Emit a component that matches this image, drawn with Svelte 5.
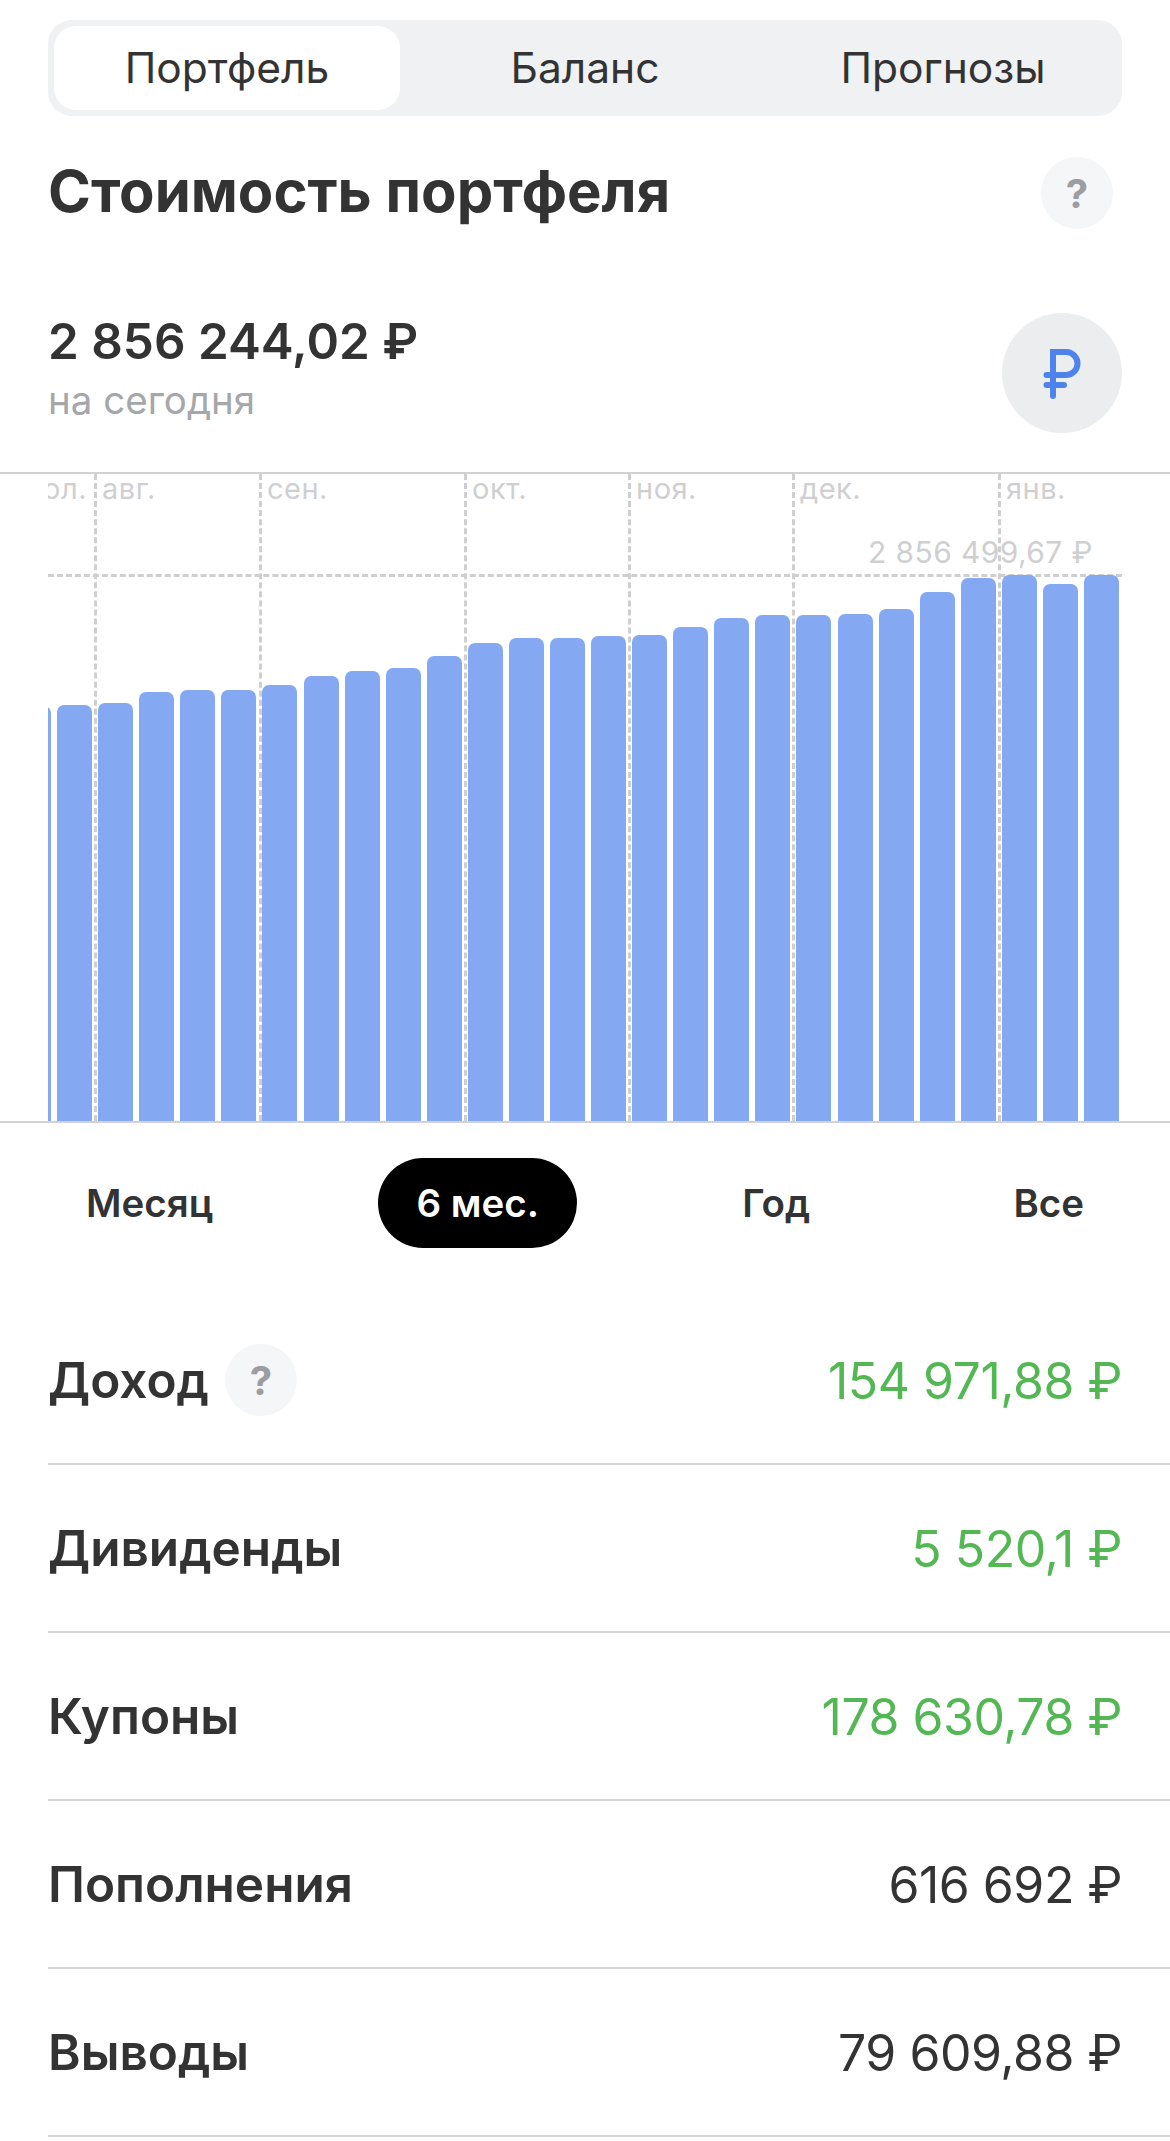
<script>
  const tabs = [
    { label: 'Портфель', active: true },
    { label: 'Баланс' },
    { label: 'Прогнозы' }
  ];
  const baseline = 1121;
  const tops = [706, 705, 703, 692, 690, 690, 685, 676, 671, 668, 656, 643, 638, 638, 636, 635, 627, 618, 615, 615, 614, 609, 592, 578, 575, 584, 575];
  const months = [
    { x: 95, label: 'авг.' },
    { x: 260, label: 'сен.' },
    { x: 465, label: 'окт.' },
    { x: 629, label: 'ноя.' },
    { x: 793, label: 'дек.' },
    { x: 999, label: 'янв.' }
  ];
  const periods = [
    { label: 'Месяц' },
    { label: '6 мес.', active: true },
    { label: 'Год' },
    { label: 'Все' }
  ];
  const rows = [
    { label: 'Доход', value: '154 971,88 ₽', green: true, help: true },
    { label: 'Дивиденды', value: '5 520,1 ₽', green: true },
    { label: 'Купоны', value: '178 630,78 ₽', green: true },
    { label: 'Пополнения', value: '616 692 ₽' },
    { label: 'Выводы', value: '79 609,88 ₽' }
  ];
</script>

<main class="page">
  <div class="tabs">
    {#each tabs as tab}
      <div class="tab" class:active={tab.active}>{tab.label}</div>
    {/each}
  </div>

  <div class="title-row">
    <h1>Стоимость портфеля</h1>
    <span class="help">?</span>
  </div>

  <div class="hero">
    <div>
      <div class="amount">2 856 244,02 ₽</div>
      <div class="today">на сегодня</div>
    </div>
    <div class="ruble">
      <svg width="120" height="120" viewBox="0 0 120 120" fill="none" stroke="#4f83ec" stroke-width="6" stroke-linecap="round">
        <path d="M51 83V39H64a11.5 11.5 0 0 1 0 23H44.5" stroke-linecap="butt" />
        <path d="M44.5 62H50M44.5 72H62M51 62V83" />
      </svg>
    </div>
  </div>

  <div class="chart">
    <div class="month clipped">июл.</div>
    {#each months as m}
      <div class="vline" style="left:{m.x - 1.5}px"></div>
      <div class="month" style="left:{m.x + 7}px">{m.label}</div>
    {/each}
    <div class="hline"></div>
    <div class="max">2 856 499,67 ₽</div>
    <div class="bars">
      {#each tops as top}
        <div class="bar" style="height:{baseline - top}px"></div>
      {/each}
    </div>
  </div>

  <div class="periods">
    {#each periods as p}
      <div class="period" class:active={p.active}>{p.label}</div>
    {/each}
  </div>

  <div class="rows">
    {#each rows as row}
      <div class="row">
        <div class="row-label">
          <span>{row.label}</span>
          {#if row.help}<span class="help">?</span>{/if}
        </div>
        <div class="row-value" class:green={row.green}>{row.value}</div>
      </div>
    {/each}
  </div>
</main>

<style>
  :global(body) {
    margin: 0;
    background: #fff;
  }
  .page {
    width: 1170px;
    height: 2141px;
    overflow: hidden;
    padding-top: 20px;
    box-sizing: border-box;
    font-family: Inter, "Liberation Sans", sans-serif;
    color: #333;
  }
  .tabs {
    margin: 0 48px;
    height: 96px;
    box-sizing: border-box;
    padding: 6px 6px;
    background: #f0f1f3;
    border-radius: 24px;
    display: grid;
    grid-template-columns: 346px 370px 346px;
  }
  .tab {
    display: flex;
    align-items: center;
    justify-content: center;
    font-size: 42.5px;
    font-weight: 400;
    height: 84px;
    box-sizing: border-box;
    padding-bottom: 2px;
  }
  .tab.active {
    background: #fff;
    border-radius: 22px;
  }
  .title-row {
    margin: 41px 57px 0 48px;
    height: 72px;
    display: flex;
    align-items: center;
    justify-content: space-between;
  }
  h1 {
    margin: 0;
    font-size: 58px;
    font-weight: 700;
    position: relative;
    top: -2px;
  }
  .help {
    width: 72px;
    height: 72px;
    border-radius: 50%;
    background: #f5f6f8;
    color: #9c9da1;
    font-size: 40px;
    font-weight: 700;
    display: inline-flex;
    align-items: center;
    justify-content: center;
    flex: none;
  }
  .hero {
    margin: 84px 48px 0;
    height: 120px;
    display: flex;
    justify-content: space-between;
  }
  .amount {
    font-size: 49.4px;
    font-weight: 600;
    line-height: 58px;
    margin-top: -1px;
  }
  .today {
    font-size: 38.5px;
    color: #a5a7a9;
    line-height: 46px;
    margin-top: 7px;
  }
  .ruble {
    width: 120px;
    height: 120px;
    border-radius: 50%;
    background: #ebedef;
  }
  .chart {
    position: relative;
    margin-top: 39px;
    height: 651px;
    box-sizing: border-box;
    border-top: 2px solid #d2d2d4;
    border-bottom: 2px solid #d2d2d4;
  }
  .bars {
    position: absolute;
    left: 48px;
    right: 51px;
    bottom: 0;
    top: 0;
    overflow: hidden;
    display: flex;
    align-items: flex-end;
    justify-content: flex-end;
    gap: 6.08px;
  }
  .bar {
    width: 35px;
    flex: none;
    background: #84a9f2;
    border-radius: 7px 7px 0 0;
  }
  .vline {
    position: absolute;
    top: 0;
    bottom: 0;
    width: 0;
    border-left: 3px dashed #cfcfd1;
  }
  .hline {
    position: absolute;
    left: 48px;
    right: 48px;
    top: 100px;
    height: 0;
    border-top: 3px dashed #cfcfd1;
  }
  .month {
    position: absolute;
    top: -4px;
    font-size: 29px;
    line-height: 38px;
    color: #cfcfd1;
    letter-spacing: 0.5px;
  }
  .clipped {
    left: 48px;
    width: 39px;
    overflow: hidden;
    display: flex;
    justify-content: flex-end;
    white-space: nowrap;
  }
  .max {
    position: absolute;
    left: 868px;
    top: 58px;
    font-size: 30px;
    line-height: 40px;
    color: #cfcfd1;
    letter-spacing: 0.4px;
    white-space: nowrap;
  }
  .periods {
    margin: 35px 48px 0;
    display: flex;
    justify-content: space-between;
  }
  .period {
    height: 90px;
    padding: 0 38px;
    display: flex;
    align-items: center;
    font-size: 38.5px;
    font-weight: 600;
    border-radius: 45px;
  }
  .period.active {
    background: #000;
    color: #fff;
  }
  .rows {
    margin-top: 49px;
    margin-left: 48px;
  }
  .row {
    height: 168px;
    box-sizing: border-box;
    border-bottom: 2px solid #d6d6d8;
    padding-right: 48px;
    display: flex;
    align-items: center;
    justify-content: space-between;
  }
  .row-label {
    display: flex;
    align-items: center;
    gap: 16px;
    font-size: 49.5px;
    font-weight: 600;
  }
  .row-value {
    font-size: 50px;
    font-weight: 400;
    letter-spacing: -0.5px;
    margin-top: 2px;
  }
  .green {
    color: #53b853;
  }
</style>
